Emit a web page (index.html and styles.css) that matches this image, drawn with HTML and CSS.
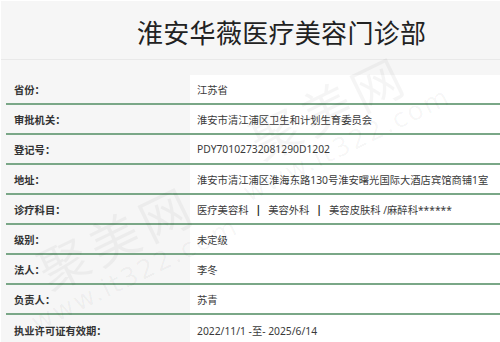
FILE: index.html
```html
<!DOCTYPE html>
<html lang="zh-CN">
<head>
<meta charset="utf-8">
<title>淮安华薇医疗美容门诊部</title>
<link rel="stylesheet" href="styles.css">
</head>
<body>
<div class="page">
  <h1 class="title">淮安华薇医疗美容门诊部</h1>
  <div class="table">
    <div class="row"><div class="label">省份：</div><div class="value">江苏省</div></div>
    <div class="row"><div class="label">审批机关：</div><div class="value">淮安市清江浦区卫生和计划生育委员会</div></div>
    <div class="row"><div class="label">登记号：</div><div class="value">PDY70102732081290D1202</div></div>
    <div class="row"><div class="label">地址：</div><div class="value">淮安市清江浦区淮海东路130号淮安曙光国际大酒店宾馆商铺1室</div></div>
    <div class="row"><div class="label">诊疗科目：</div><div class="value">医疗美容科<span class="sep">|</span>美容外科<span class="sep">|</span>美容皮肤科 /麻醉科******</div></div>
    <div class="row"><div class="label">级别：</div><div class="value">未定级</div></div>
    <div class="row"><div class="label">法人：</div><div class="value">李冬</div></div>
    <div class="row"><div class="label">负责人：</div><div class="value">苏青</div></div>
    <div class="row"><div class="label">执业许可证有效期：</div><div class="value">2022/11/1 -至- 2025/6/14</div></div>
  </div>
  <div class="wm wm-a" aria-hidden="true"><div class="wm-big">聚美网</div><div class="wm-small">www.it322.com</div></div>
  <div class="wm wm-b" aria-hidden="true"><div class="wm-big">聚美网</div><div class="wm-small">www.it322.com</div></div>
</div>
</body>
</html>
```
FILE: styles.css
```css
html, body {
  margin: 0;
  padding: 0;
  background: #ffffff;
}
body {
  width: 500px;
  height: 342px;
  overflow: hidden;
  font-family: "Noto Sans CJK SC", "Noto Sans", sans-serif;
}
.page {
  position: relative;
  margin: 1px 0 0 1px;
  height: 341px;
  background: #f6f6f6;
  overflow: hidden;
}
.title {
  margin: 0;
  height: 59px;
  box-sizing: border-box;
  padding: 2px 0 0 136px;
  display: flex;
  align-items: center;
  font-size: 26px;
  font-weight: 400;
  color: #222;
  letter-spacing: 0.3px;
  border-bottom: 1px solid #e9e9e9;
}
.table {
  margin: 15px 0 0 5px;
}
.row {
  display: grid;
  grid-template-columns: 184px 1fr;
  height: 30px;
  box-sizing: border-box;
  border-bottom: 2px solid #7aa787;
  font-family: "Noto Sans", "Noto Sans CJK SC", sans-serif;
  font-size: 10.3px;
}
.row:last-child {
  border-bottom: none;
}
.label {
  display: flex;
  align-items: center;
  padding-left: 8px;
  font-weight: 700;
  color: #333;
}
.value {
  display: flex;
  align-items: center;
  padding-left: 7px;
  background: #ffffff;
  color: #3a3a3a;
}
.sep {
  font-weight: 700;
  color: #222;
  margin: 0 7px;
}
.wm {
  position: absolute;
  pointer-events: none;
  transform: rotate(-26deg);
  color: rgba(0, 0, 0, 0.04);
  text-align: center;
  white-space: nowrap;
}
.wm-big {
  font-size: 50px;
  line-height: 56px;
  letter-spacing: 6px;
}
.wm-small {
  font-family: "DejaVu Sans", sans-serif;
  font-size: 26px;
  line-height: 30px;
  letter-spacing: 2px;
}
.wm-a {
  left: 220px;
  top: 75px;
}
.wm-b {
  left: 8px;
  top: 205px;
}
```
